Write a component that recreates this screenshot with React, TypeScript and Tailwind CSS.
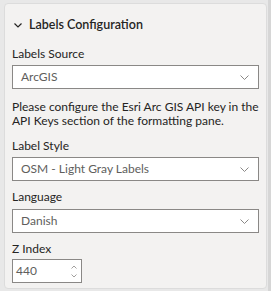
import React from 'react';

const font = { fontFamily: 'Lato, "Noto Sans", sans-serif' };

function Chevron({ className }: { className?: string }) {
  return (
    <svg width="9" height="5" viewBox="0 0 9 5" className={className} fill="none">
      <path d="M0.5 0.5 L4.5 4.5 L8.5 0.5" stroke="currentColor" strokeWidth="1" />
    </svg>
  );
}

function Select({ value, className }: { value: string; className?: string }) {
  return (
    <div
      className={`flex h-[24px] items-center justify-between border border-[#8a8886] bg-white pl-[8px] pr-[9px] text-[12px] text-[#605e5c] ${className ?? ''}`}
    >
      <span>{value}</span>
      <Chevron className="text-[#8a8886]" />
    </div>
  );
}

function Label({ children, className }: { children: React.ReactNode; className?: string }) {
  return <div className={`text-[12px] leading-[16px] text-[#252423] ${className ?? ''}`}>{children}</div>;
}

export default function App() {
  return (
    <div className="flex h-[291px] w-[271px] bg-[#e8e8e8] pl-[4px] pt-[3px]" style={font}>
      <div className="flex h-[286px] w-[263px] flex-col rounded-[4px] border border-[#dcdcdc] bg-[#f3f2f1] px-[7px] pt-[12px]">
        <div className="flex h-[18px] items-center gap-[7px] pl-[2px]">
          <svg width="8" height="5" viewBox="0 0 8 5" fill="none" className="text-[#252423]">
            <path d="M0.5 0.5 L4 4 L7.5 0.5" stroke="currentColor" strokeWidth="1.2" />
          </svg>
          <span className="text-[12.5px] font-semibold leading-[18px] text-[#252423]">Labels Configuration</span>
        </div>
        <Label className="mt-[12px]">Labels Source</Label>
        <Select value="ArcGIS" className="mt-[3px]" />
        <p className="mt-[11px] text-[12px] leading-[13.5px] text-[#252423]">
          Please configure the Esri Arc GIS API key in the API Keys section of the formatting pane.
        </p>
        <Label className="mt-[11px]">Label Style</Label>
        <Select value="OSM - Light Gray Labels" className="mt-[3px]" />
        <Label className="mt-[8px]">Language</Label>
        <Select value="Danish" className="mt-[4px]" />
        <Label className="mt-[8px]">Z Index</Label>
        <div className="mt-[2px] flex h-[24px] w-[70px] items-center justify-between border border-[#8a8886] bg-white pl-[3px] pr-[4px] text-[12px] text-[#605e5c]">
          <span>440</span>
          <div className="flex flex-col gap-[5px] text-[#a19f9d]">
            <svg width="6" height="4" viewBox="0 0 6 4" fill="none">
              <path d="M0.5 3.5 L3 1 L5.5 3.5" stroke="currentColor" strokeWidth="1" />
            </svg>
            <svg width="6" height="4" viewBox="0 0 6 4" fill="none">
              <path d="M0.5 0.5 L3 3 L5.5 0.5" stroke="currentColor" strokeWidth="1" />
            </svg>
          </div>
        </div>
      </div>
      <div className="ml-[1px] mt-[-3px] w-[3px] bg-[#d6d6d6]" />
    </div>
  );
}
